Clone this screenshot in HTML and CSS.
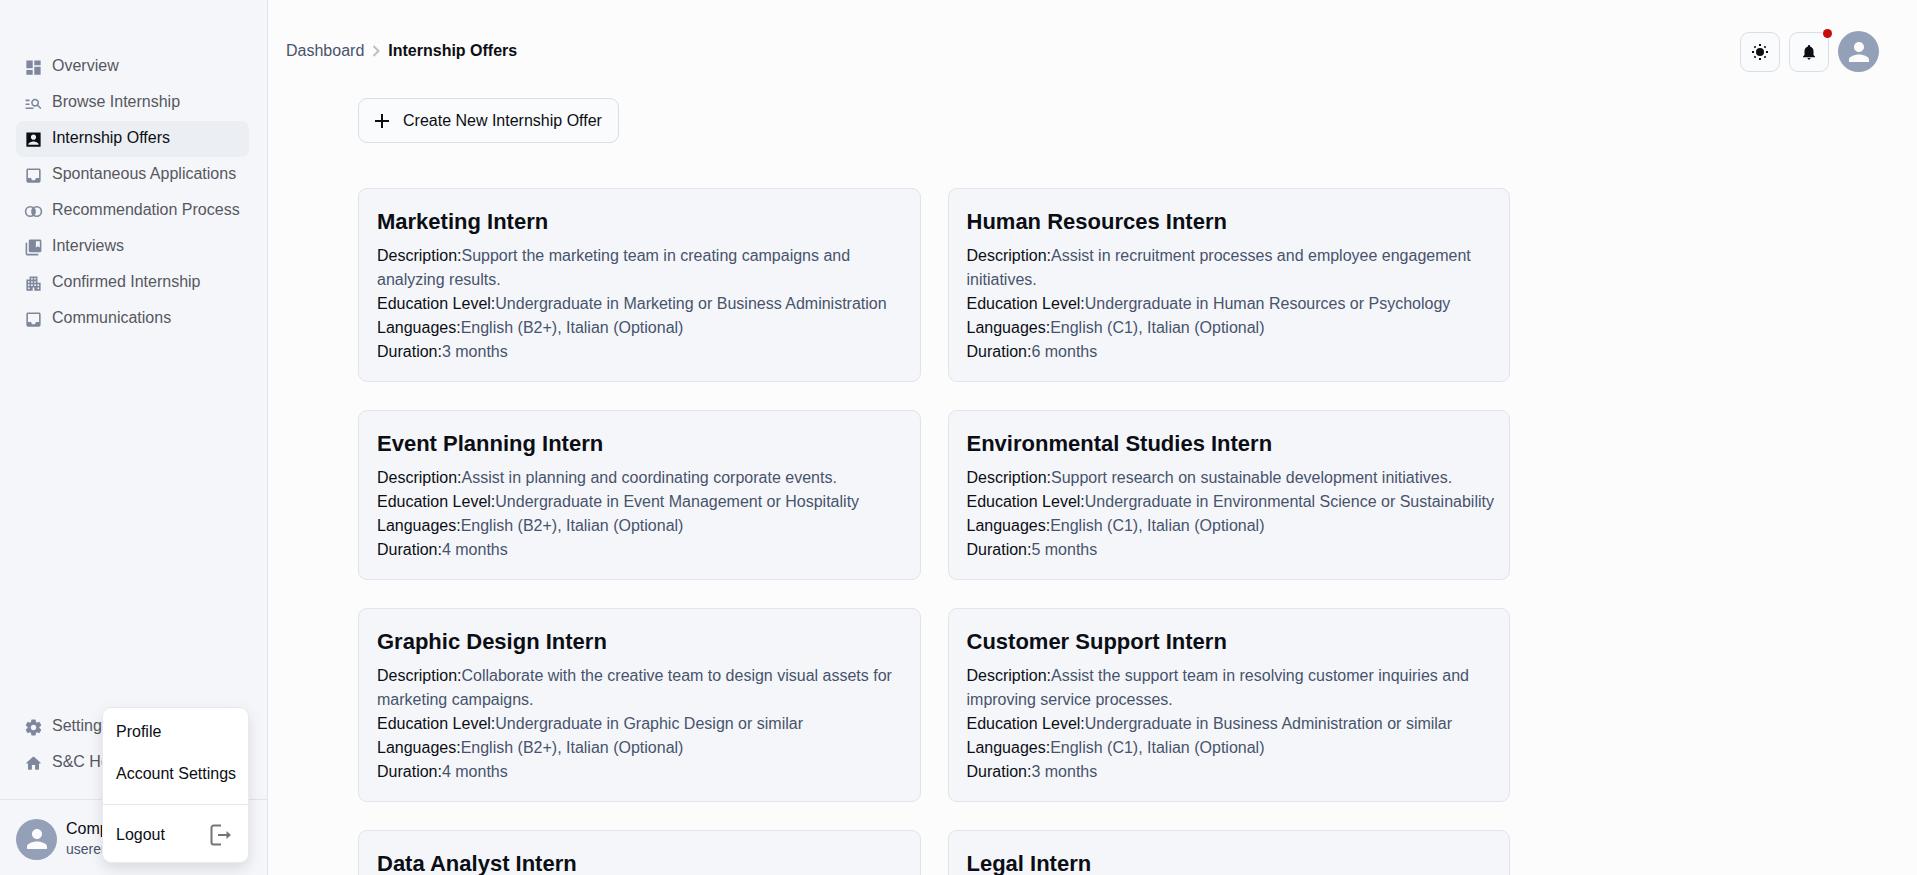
FILE: index.html
```html
<!DOCTYPE html>
<html lang="en">
<head>
<meta charset="utf-8">
<meta name="viewport" content="width=device-width, initial-scale=1">
<title>Internship Offers</title>
<link rel="stylesheet" href="styles.css">
</head>
<body>
<div class="app">
  <aside class="sidebar">
    <nav class="nav" aria-label="Main">
      <a class="nav-item" href="#"><svg class="icon" viewBox="0 0 24 24"><path d="M3 13h8V3H3zm0 8h8v-6H3zm10 0h8V11h-8zm0-18v6h8V3z"/></svg><span>Overview</span></a>
      <a class="nav-item" href="#"><svg class="icon" viewBox="0 0 24 24"><path d="M7 9H2V7h5zm0 3H2v2h5zm13.59 7-3.83-3.83c-.8.52-1.74.83-2.76.83-2.76 0-5-2.24-5-5s2.24-5 5-5 5 2.24 5 5c0 1.02-.31 1.96-.83 2.75L22 17.59zM17 11c0-1.65-1.35-3-3-3s-3 1.35-3 3 1.35 3 3 3 3-1.35 3-3M2 19h10v-2H2z"/></svg><span>Browse Internship</span></a>
      <a class="nav-item active" href="#" aria-current="page"><svg class="icon" viewBox="0 0 24 24"><path d="M3 3.500v17c0 .3.200.5.500.5h17c.3 0 .5-.2.500-.5v-17c0-.3-.2-.5-.5-.5h-17c-.3 0-.5.200-.5.500m12.300 5.500c0 1.800-1.500 3.300-3.300 3.300s-3.300-1.500-3.300-3.300 1.500-3.300 3.300-3.300 3.300 1.500 3.300 3.300M5.500 18c0-2.300 4.300-3.600 6.500-3.600s6.500 1.300 6.500 3.600v.5h-13z"/></svg><span>Internship Offers</span></a>
      <a class="nav-item" href="#"><svg class="icon" viewBox="0 0 24 24"><path d="M19 3H5c-1.100 0-2 .9-2 2v14c0 1.100.9 2 2 2h14c1.100 0 2-.9 2-2V5c0-1.100-.9-2-2-2m0 12h-4c0 1.660-1.350 3-3 3s-3-1.340-3-3H5V5h14z"/></svg><span>Spontaneous Applications</span></a>
      <a class="nav-item" href="#"><svg class="icon" viewBox="0 0 24 24"><circle class="ring" cx="8" cy="12" r="6"/><circle class="ring" cx="16" cy="12" r="6"/><path d="M12 7c-2.700 2.800-2.700 7.200 0 10 2.700-2.800 2.700-7.200 0-10"/></svg><span>Recommendation Process</span></a>
      <a class="nav-item" href="#"><svg class="icon" viewBox="0 0 24 24"><path d="M4 6H2v14c0 1.100.9 2 2 2h14v-2H4z"/><path d="M20 2H8c-1.100 0-2 .9-2 2v12c0 1.100.9 2 2 2h12c1.100 0 2-.9 2-2V4c0-1.100-.9-2-2-2m0 10-2.500-1.500L15 12V4h5z"/></svg><span>Interviews</span></a>
      <a class="nav-item" href="#"><svg class="icon" viewBox="0 0 24 24"><path d="M17 11V3H7v4H3v14h8v-4h2v4h8V11zM7 19H5v-2h2zm0-4H5v-2h2zm0-4H5V9h2zm4 4H9v-2h2zm0-4H9V9h2zm0-4H9V5h2zm4 8h-2v-2h2zm0-4h-2V9h2zm0-4h-2V5h2zm4 12h-2v-2h2zm0-4h-2v-2h2z"/></svg><span>Confirmed Internship</span></a>
      <a class="nav-item" href="#"><svg class="icon" viewBox="0 0 24 24"><path d="M19 3H5c-1.100 0-2 .9-2 2v14c0 1.100.9 2 2 2h14c1.100 0 2-.9 2-2V5c0-1.100-.9-2-2-2m0 12h-4c0 1.660-1.350 3-3 3s-3-1.340-3-3H5V5h14z"/></svg><span>Communications</span></a>
    </nav>
    <nav class="nav nav-secondary" aria-label="Secondary">
      <a class="nav-item" href="#"><svg class="icon" viewBox="0 0 24 24"><path d="M19.500 12c0-.23-.01-.45-.03-.68l1.860-1.410c.4-.3.510-.86.260-1.300l-1.870-3.230c-.25-.44-.79-.62-1.250-.42l-2.150.91c-.37-.26-.76-.49-1.170-.68l-.29-2.310c-.06-.5-.49-.88-.99-.88h-3.730c-.51 0-.94.38-1 .88l-.29 2.310c-.41.19-.8.42-1.170.68l-2.150-.91c-.46-.2-1-.02-1.250.42L2.410 8.620c-.25.440-.14.990.26 1.300l1.860 1.410c-.02.220-.03.440-.03.670s.01.450.03.680l-1.860 1.410c-.4.300-.51.860-.26 1.300l1.870 3.230c.25.440.790.620 1.250.42l2.150-.91c.37.260.76.490 1.170.68l.29 2.310c.06.500.490.880.990.88h3.730c.5 0 .930-.38.990-.88l.29-2.310c.41-.19.800-.42 1.170-.68l2.150.91c.46.200 1 .02 1.250-.42l1.870-3.230c.25-.44.140-.99-.26-1.300l-1.860-1.410c.03-.23.040-.45.040-.68m-7.460 3.500c-1.930 0-3.500-1.570-3.500-3.500s1.570-3.500 3.500-3.500 3.500 1.570 3.500 3.500-1.570 3.500-3.500 3.500"/></svg><span>Settings</span></a>
      <a class="nav-item" href="#"><svg class="icon" viewBox="0 0 24 24"><path d="M10 19v-5h4v5c0 .55.450 1 1 1h3c.55 0 1-.45 1-1v-7h1.700c.46 0 .680-.57.330-.87L12.670 3.600c-.38-.34-.96-.34-1.340 0l-8.360 7.530c-.34.300-.13.870.33.870H5v7c0 .55.450 1 1 1h3c.55 0 1-.45 1-1"/></svg><span>S&amp;C Home</span></a>
    </nav>
    <div class="account">
      <span class="avatar"><svg viewBox="0 0 24 24"><path d="M12 12c2.210 0 4-1.790 4-4s-1.790-4-4-4-4 1.790-4 4 1.790 4 4 4m0 2c-2.670 0-8 1.340-8 4v2h16v-2c0-2.660-5.330-4-8-4"/></svg></span>
      <div class="account-text">
        <div class="account-name">Company</div>
        <div class="account-mail">useremail</div>
      </div>
      <div class="menu" role="menu">
        <button class="menu-item" type="button" role="menuitem">Profile</button>
        <button class="menu-item" type="button" role="menuitem">Account Settings</button>
        <hr class="menu-rule">
        <button class="menu-item logout" type="button" role="menuitem"><span>Logout</span><svg viewBox="0 0 22 22"><path d="M11 1.500H3.500a2 2 0 0 0-2 2v15a2 2 0 0 0 2 2H11M8 11h10"/><path class="arrow" d="M16.500 7v8l4.500-4z"/></svg></button>
      </div>
    </div>
  </aside>

  <main class="main">
    <header class="topbar">
      <nav class="crumbs" aria-label="Breadcrumb">
        <a class="crumb" href="#">Dashboard</a>
        <svg class="chevron" viewBox="0 0 8 12"><path d="M1.500 1 6.500 6l-5 5"/></svg>
        <span class="crumb-current">Internship Offers</span>
      </nav>
      <div class="actions">
        <button class="icon-button" type="button" aria-label="Toggle theme"><svg viewBox="0 0 18 18"><circle cx="9" cy="9" r="4"/><path class="rays" d="M9 1v2M9 15v2M1 9h2M15 9h2M3.400 3.400l1.200 1.200M13.400 13.400l1.200 1.200M3.400 14.600l1.200-1.200M13.400 4.600l1.200-1.200"/></svg></button>
        <button class="icon-button" type="button" aria-label="Notifications"><svg viewBox="0 0 24 24"><path d="M12 22c1.100 0 2-.9 2-2h-4c0 1.100.89 2 2 2m6-6v-5c0-3.070-1.640-5.640-4.500-6.320V4c0-.83-.67-1.500-1.500-1.500s-1.500.67-1.500 1.500v.680C7.630 5.360 6 7.920 6 11v5l-2 2v1h16v-1z"/></svg><span class="badge"></span></button>
        <span class="avatar"><svg viewBox="0 0 24 24"><path d="M12 12c2.210 0 4-1.790 4-4s-1.790-4-4-4-4 1.790-4 4 1.790 4 4 4m0 2c-2.670 0-8 1.340-8 4v2h16v-2c0-2.660-5.330-4-8-4"/></svg></span>
      </div>
    </header>

    <section class="offers">
      <button class="create" type="button"><svg viewBox="0 0 14 14"><path d="M7 0v14M0 7h14"/></svg>Create New Internship Offer</button>
      <div class="grid">
        <article class="card">
          <h2>Marketing Intern</h2>
          <p><b>Description:</b>Support the marketing team in creating campaigns and analyzing results.</p>
          <p><b>Education Level:</b>Undergraduate in Marketing or Business Administration</p>
          <p><b>Languages:</b>English (B2+), Italian (Optional)</p>
          <p><b>Duration:</b>3 months</p>
        </article>
        <article class="card">
          <h2>Human Resources Intern</h2>
          <p><b>Description:</b>Assist in recruitment processes and employee engagement initiatives.</p>
          <p><b>Education Level:</b>Undergraduate in Human Resources or Psychology</p>
          <p><b>Languages:</b>English (C1), Italian (Optional)</p>
          <p><b>Duration:</b>6 months</p>
        </article>
        <article class="card">
          <h2>Event Planning Intern</h2>
          <p><b>Description:</b>Assist in planning and coordinating corporate events.</p>
          <p><b>Education Level:</b>Undergraduate in Event Management or Hospitality</p>
          <p><b>Languages:</b>English (B2+), Italian (Optional)</p>
          <p><b>Duration:</b>4 months</p>
        </article>
        <article class="card">
          <h2>Environmental Studies Intern</h2>
          <p><b>Description:</b>Support research on sustainable development initiatives.</p>
          <p><b>Education Level:</b>Undergraduate in Environmental Science or Sustainability</p>
          <p><b>Languages:</b>English (C1), Italian (Optional)</p>
          <p><b>Duration:</b>5 months</p>
        </article>
        <article class="card">
          <h2>Graphic Design Intern</h2>
          <p><b>Description:</b>Collaborate with the creative team to design visual assets for marketing campaigns.</p>
          <p><b>Education Level:</b>Undergraduate in Graphic Design or similar</p>
          <p><b>Languages:</b>English (B2+), Italian (Optional)</p>
          <p><b>Duration:</b>4 months</p>
        </article>
        <article class="card">
          <h2>Customer Support Intern</h2>
          <p><b>Description:</b>Assist the support team in resolving customer inquiries and improving service processes.</p>
          <p><b>Education Level:</b>Undergraduate in Business Administration or similar</p>
          <p><b>Languages:</b>English (C1), Italian (Optional)</p>
          <p><b>Duration:</b>3 months</p>
        </article>
        <article class="card">
          <h2>Data Analyst Intern</h2>
        </article>
        <article class="card">
          <h2>Legal Intern</h2>
        </article>
      </div>
    </section>
  </main>
</div>
</body>
</html>
```
FILE: styles.css
```css
:root {
  --text: #0b0e14;
  --muted: #47536b;
  --panel: #f5f6fa;
  --line: #e1e4ec;
}

* { box-sizing: border-box; }

html { scrollbar-width: none; }

body {
  margin: 0;
  background: #fcfcfc;
  color: var(--text);
  font: 16px/24px "Liberation Sans", Arial, sans-serif;
}

button { font: inherit; color: inherit; cursor: pointer; }
a { color: inherit; text-decoration: none; }
svg { display: block; flex: none; fill: currentColor; }

.app { display: flex; align-items: flex-start; }

.sidebar {
  position: sticky;
  top: 0;
  z-index: 1;
  display: flex;
  flex-direction: column;
  flex: none;
  width: 268px;
  height: 100vh;
  background: var(--panel);
  border-right: 1px solid var(--line);
}

.nav { display: flex; flex-direction: column; padding: 49px 18px 0 16px; }
.nav-secondary { margin-top: auto; padding: 0 18px 18px 16px; }

.nav-item {
  display: flex;
  align-items: center;
  gap: 9px;
  height: 36px;
  padding: 0 8px 2px;
  border-radius: 8px;
  color: #55585e;
  white-space: nowrap;
}
.nav-item .icon { width: 19px; height: 19px; color: #7e879c; margin-top: 2px; }
.nav-item .ring { fill: none; stroke: currentColor; stroke-width: 2; }
.nav-item.active { background: #ebeff3; color: var(--text); }
.nav-item.active .icon { color: var(--text); }

.avatar {
  display: flex;
  flex: none;
  align-items: center;
  justify-content: center;
  width: 41px;
  height: 41px;
  border-radius: 50%;
  background: #94a0b8;
  color: #fcfcfc;
}
.avatar svg { width: 30px; height: 30px; }

.account {
  position: relative;
  display: flex;
  align-items: center;
  gap: 9px;
  padding: 18px 16px 15px;
  border-top: 1px solid var(--line);
}
.account-name { line-height: 21px; }
.account-mail { font-size: 14px; line-height: 21px; color: var(--muted); }

.menu {
  position: absolute;
  right: 18px;
  bottom: 12px;
  display: flex;
  flex-direction: column;
  width: 147px;
  padding: 3px 0 6px;
  background: #fff;
  border: 1px solid #e8eaf0;
  border-radius: 9px;
  box-shadow: 0 4px 16px rgba(20, 30, 50, 0.08), 0 8px 16px -5px rgba(20, 30, 50, 0.08);
}
.menu-item {
  height: 42px;
  padding: 0 13px;
  border: 0;
  background: none;
  text-align: left;
  white-space: nowrap;
}
.menu-rule { width: 100%; margin: 9px 0; border: 0; border-top: 1px solid #e6e8ee; }
.logout { display: flex; align-items: center; justify-content: space-between; padding-right: 16px; }
.logout svg { width: 22px; height: 22px; fill: none; stroke: #757575; stroke-width: 2; }
.logout .arrow { fill: #757575; stroke: none; }

.main { flex: 1; min-width: 0; padding: 31px 38px 31px 18px; }

.topbar { display: flex; align-items: center; justify-content: space-between; height: 41px; }
.crumbs { display: flex; align-items: center; gap: 8px; padding-bottom: 2px; }
.crumb { color: var(--muted); }
.chevron { width: 8px; height: 12px; fill: none; stroke: #bcbfc5; stroke-width: 2; }
.crumb-current { font-weight: 700; }

.actions { display: flex; align-items: center; gap: 9px; }
.icon-button {
  position: relative;
  display: flex;
  align-items: center;
  justify-content: center;
  width: 40px;
  height: 40px;
  padding: 0;
  border: 1px solid #dadee7;
  border-radius: 9px;
  background: #fafbfc;
}
.icon-button svg { width: 18px; height: 18px; }
.icon-button .rays { fill: none; stroke: currentColor; stroke-width: 2; }
.badge {
  position: absolute;
  top: -4px;
  right: -4px;
  width: 9px;
  height: 9px;
  border-radius: 50%;
  background: #c60c0c;
}

.offers { max-width: 1224px; padding: 26px 0 0 72px; }

.create {
  display: flex;
  align-items: center;
  gap: 14px;
  height: 45px;
  padding: 0 16px;
  border: 1px solid #dadee7;
  border-radius: 9px;
  background: #fafbfc;
}
.create svg { width: 14px; height: 14px; stroke: currentColor; stroke-width: 2; }

.grid {
  display: grid;
  grid-template-columns: repeat(auto-fit, minmax(480px, 1fr));
  gap: 28px 27px;
  margin-top: 45px;
}
.card {
  padding: 19px 12px 17px 18px;
  background: var(--panel);
  border: 1px solid var(--line);
  border-radius: 9px;
}
.card h2 { margin: 0 0 8px; font-size: 22px; line-height: 28px; }
.card p { margin: 0; color: var(--muted); }
.card b { font-weight: 400; color: var(--text); }
```
